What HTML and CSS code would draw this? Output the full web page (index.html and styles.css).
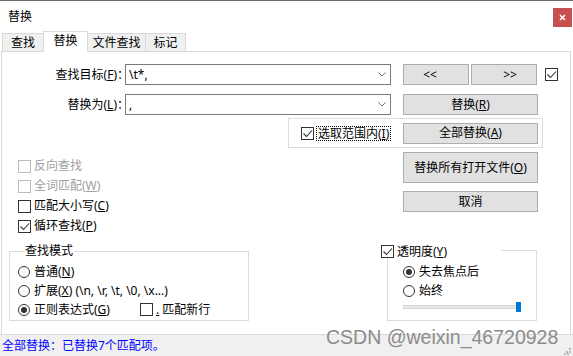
FILE: index.html
```html
<!DOCTYPE html>
<html lang="zh-CN">
<head>
    <meta charset="UTF-8">
    <title>替换</title>
    <link rel="stylesheet" href="styles.css">
</head>
<body>

    <div class="window">
        <div class="titlebar">
            <span class="title">替换</span>
            <span class="close">
                <svg width="7" height="7" viewBox="0 0 7 7"><path d="M1 1 L6 6 M6 1 L1 6" stroke="#fff" stroke-width="1.6"/></svg>
            </span>
        </div>

        <!-- Tabs -->
        <div class="tabs">
            <div class="tab tab-find">查找</div>
            <div class="tab tab-replace active">替换</div>
            <div class="tab tab-files">文件查找</div>
            <div class="tab tab-mark">标记</div>
        </div>

        <div class="panel">
            <div class="row">
                <label class="field-label">查找目标(<u>F</u>)：</label>
                <div class="combo">
                    <span class="combo-text">\t*,</span>
                    <svg class="chevron" width="8" height="5" viewBox="0 0 8 5"><path d="M0.5 0.5 L4 4 L7.5 0.5" fill="none" stroke="#707070" stroke-width="1"/></svg>
                </div>
                <div class="btn btn-prev">&lt;&lt;</div>
                <div class="btn btn-next">&gt;&gt;</div>
                <span class="box checked"><svg width="11" height="11" viewBox="0 0 11 11"><path d="M1.5 5.5 L4.5 8.5 L10 2.5" fill="none" stroke="#333" stroke-width="1.1"/></svg></span>
            </div>

            <div class="row row-second">
                <label class="field-label">替换为(<u>L</u>)：</label>
                <div class="combo">
                    <span class="combo-text">,</span>
                    <svg class="chevron" width="8" height="5" viewBox="0 0 8 5"><path d="M0.5 0.5 L4 4 L7.5 0.5" fill="none" stroke="#707070" stroke-width="1"/></svg>
                </div>
                <div class="btn btn-wide"><span>替换(<u>R</u>)</span></div>
            </div>

            <!-- Selection scope -->
            <div class="scope">
                <div class="check">
                    <span class="box checked"><svg width="11" height="11" viewBox="0 0 11 11"><path d="M1.5 5.5 L4.5 8.5 L10 2.5" fill="none" stroke="#333" stroke-width="1.1"/></svg></span>
                    <span class="focus">选取范围内(<u>I</u>)</span>
                </div>
                <div class="btn btn-wide"><span>全部替换(<u>A</u>)</span></div>
            </div>

            <div class="middle">
                <div class="options">
                    <div class="check disabled"><span class="box"></span><span>反向查找</span></div>
                    <div class="check disabled"><span class="box"></span><span>全词匹配(<u>W</u>)</span></div>
                    <div class="check"><span class="box"></span><span>匹配大小写(<u>C</u>)</span></div>
                    <div class="check"><span class="box checked"><svg width="11" height="11" viewBox="0 0 11 11"><path d="M1.5 5.5 L4.5 8.5 L10 2.5" fill="none" stroke="#333" stroke-width="1.1"/></svg></span><span>循环查找(<u>P</u>)</span></div>
                </div>
                <div class="actions">
                    <div class="btn btn-wide btn-tall"><span>替换所有打开文件(<u>O</u>)</span></div>
                    <div class="btn btn-wide">取消</div>
                </div>
            </div>

            <div class="bottom">
                <fieldset class="mode">
                    <legend>查找模式</legend>
                    <div class="radio-row"><span class="radio"></span><span>普通(<u>N</u>)</span></div>
                    <div class="radio-row"><span class="radio"></span><span>扩展(<u>X</u>) (\n, \r, \t, \0, \x...)</span></div>
                    <div class="radio-row">
                        <span class="radio-label"><span class="radio on"></span><span>正则表达式(<u>G</u>)</span></span>
                        <span class="check"><span class="box"></span><span><u>.</u>&nbsp;匹配新行</span></span>
                    </div>
                </fieldset>

                <div class="opacity">
                    <div class="opacity-title check"><span class="box checked"><svg width="11" height="11" viewBox="0 0 11 11"><path d="M1.5 5.5 L4.5 8.5 L10 2.5" fill="none" stroke="#333" stroke-width="1.1"/></svg></span><span>透明度(<u>Y</u>)</span></div>
                    <div class="radio-row"><span class="radio on"></span><span>失去焦点后</span></div>
                    <div class="radio-row"><span class="radio"></span><span>始终</span></div>
                    <div class="slider">
                        <div class="track"></div>
                        <div class="thumb"></div>
                    </div>
                </div>
            </div>
        </div>

        <div class="statusbar">
            <span class="status-text">全部替换：已替换7个匹配项。</span>
            <svg class="grip" width="7" height="7" viewBox="0 0 7 7" fill="#b8b8b8">
                <rect x="5" y="0" width="2" height="2"/><rect x="2" y="3" width="2" height="2"/><rect x="5" y="3" width="2" height="2"/>
                <rect x="0" y="5" width="2" height="2"/><rect x="3" y="5" width="2" height="2"/>
            </svg>
        </div>

        <div class="watermark">CSDN @weixin_46720928</div>
    </div>

</body>
</html>
```

FILE: styles.css
```css
* {
    margin: 0;
    padding: 0;
    box-sizing: border-box;
}

body {
    font-family: "Noto Sans", "Noto Sans CJK SC", sans-serif;
    font-size: 12px;
    line-height: 14px;
    color: #000;
    background: #fff;
}

u {
    text-decoration: underline;
    text-underline-offset: 1px;
}

.window {
    position: relative;
    width: 573px;
    height: 356px;
    border-top: 1px solid #6e6e6e;
    background: #fff;
    display: flex;
    flex-direction: column;
}

/* title bar */
.titlebar {
    height: 30px;
    display: flex;
    align-items: flex-start;
}

.title {
    margin: 9px 0 0 8px;
}

.close {
    margin: 7px 1px 0 auto;
    width: 19px;
    height: 19px;
    background: #c75050;
    display: flex;
    align-items: center;
    justify-content: center;
}

/* tabs */
.tabs {
    height: 20px;
    display: flex;
    align-items: flex-end;
    padding-left: 2px;
}

.tab {
    height: 18px;
    border: 1px solid #d9d9d9;
    border-bottom: none;
    background: #f0f0f0;
    text-align: center;
    line-height: 17px;
    margin-left: -1px;
}

.tab:first-child {
    margin-left: 0;
}

.tab-find { width: 42px; }
.tab-replace { width: 45px; }
.tab-files { width: 59px; }
.tab-mark { width: 41px; }

.tab.active {
    height: 21px;
    margin-bottom: -1px;
    background: #fff;
    position: relative;
    z-index: 1;
    line-height: 18px;
}

/* main panel */
.panel {
    margin-left: 1px;
    width: 570px;
    height: 283px;
    border: 1px solid #d9d9d9;
    border-bottom: none;
    padding-top: 12px;
}

.row {
    display: flex;
    align-items: center;
    height: 21px;
}

.row-second {
    margin-top: 9px;
}

.field-label {
    width: 127px;
    text-align: right;
    margin-right: -4px;
}

.combo {
    width: 266px;
    height: 21px;
    border: 1px solid #7a7a7a;
    padding: 0 4px 0 3px;
    display: flex;
    align-items: center;
}

.chevron {
    margin-left: auto;
}

.btn {
    height: 21px;
    background: #e1e1e1;
    border: 1px solid #adadad;
    display: flex;
    align-items: center;
    justify-content: center;
}

.btn-prev {
    width: 66px;
    margin-left: 12px;
    padding-right: 12px;
}

.btn-next {
    width: 66px;
    margin-left: 2px;
    padding-left: 12px;
}

.btn-wide {
    width: 135px;
}

.row-second .btn-wide {
    margin-left: 12px;
}

.btn-tall {
    height: 31px;
}

/* check boxes and radios */
.box {
    width: 13px;
    height: 13px;
    border: 1px solid #333;
    background: #fff;
    display: inline-flex;
    align-items: center;
    justify-content: center;
    flex-shrink: 0;
}

.row > .box {
    margin-left: 8px;
}

.check {
    display: flex;
    align-items: center;
}

.check .box {
    margin-right: 3px;
}

.check.disabled {
    color: #a0a0a0;
}

.check.disabled .box {
    border-color: #bcbcbc;
}

.radio {
    width: 12px;
    height: 12px;
    border: 1px solid #333;
    border-radius: 50%;
    background: #fff;
    display: inline-flex;
    align-items: center;
    justify-content: center;
    margin-right: 4px;
    flex-shrink: 0;
}

.radio.on::after {
    content: "";
    width: 6px;
    height: 6px;
    border-radius: 50%;
    background: #333;
}

/* selection scope box */
.scope {
    margin: 3px 0 0 286px;
    width: 255px;
    height: 30px;
    border: 1px solid #dcdcdc;
    display: flex;
    align-items: center;
    padding-left: 12px;
}

.scope .btn-wide {
    margin-left: auto;
    margin-right: 4px;
}

.focus {
    outline: 1px dotted #000;
    outline-offset: 0;
    padding: 0 1px;
    line-height: 13px;
}

.middle {
    margin-top: 4px;
    display: flex;
}

.options {
    padding: 4px 0 0 16px;
    width: 401px;
}

.options .check {
    height: 20px;
}

.actions {
    display: flex;
    flex-direction: column;
    gap: 8px;
}

/* bottom group boxes */
.bottom {
    margin-top: 9px;
    display: flex;
    align-items: flex-start;
}

.mode {
    margin-left: 7px;
    width: 240px;
    border: 1px solid #dcdcdc;
    padding: 5px 0 1px 8px;
}

.mode legend {
    margin-left: 6px;
    padding: 0 1px;
    line-height: 12px;
}

.radio-row {
    height: 19px;
    display: flex;
    align-items: center;
}

.radio-label {
    width: 122px;
    display: flex;
    align-items: center;
}

.opacity {
    position: relative;
    margin: 5px 0 0 138px;
    width: 150px;
    height: 71px;
    border: 1px solid #dcdcdc;
    padding: 11px 0 0 15px;
}

.opacity-title {
    position: absolute;
    left: -7px;
    top: -6px;
    width: 120px;
    height: 13px;
    background: #fff;
}

.slider {
    position: relative;
    height: 16px;
}

.track {
    position: absolute;
    left: 0;
    top: 5px;
    width: 118px;
    height: 4px;
    background: #e7eaea;
    border: 1px solid #d6d6d6;
}

.thumb {
    position: absolute;
    left: 113px;
    top: 2px;
    width: 5px;
    height: 10px;
    background: #0078d7;
}

/* status bar */
.statusbar {
    height: 22px;
    border-top: 1px solid #dadada;
    background: #f0f0f0;
    display: flex;
    align-items: center;
    padding-left: 2px;
    position: relative;
}

.status-text {
    color: #0000ff;
}

.grip {
    position: absolute;
    right: 2px;
    bottom: 1px;
}

.watermark {
    position: absolute;
    left: 326px;
    top: 327px;
    font-family: "Liberation Sans", Arial, sans-serif;
    font-size: 19.5px;
    line-height: 19px;
    color: #8c8c8c;
}
```
